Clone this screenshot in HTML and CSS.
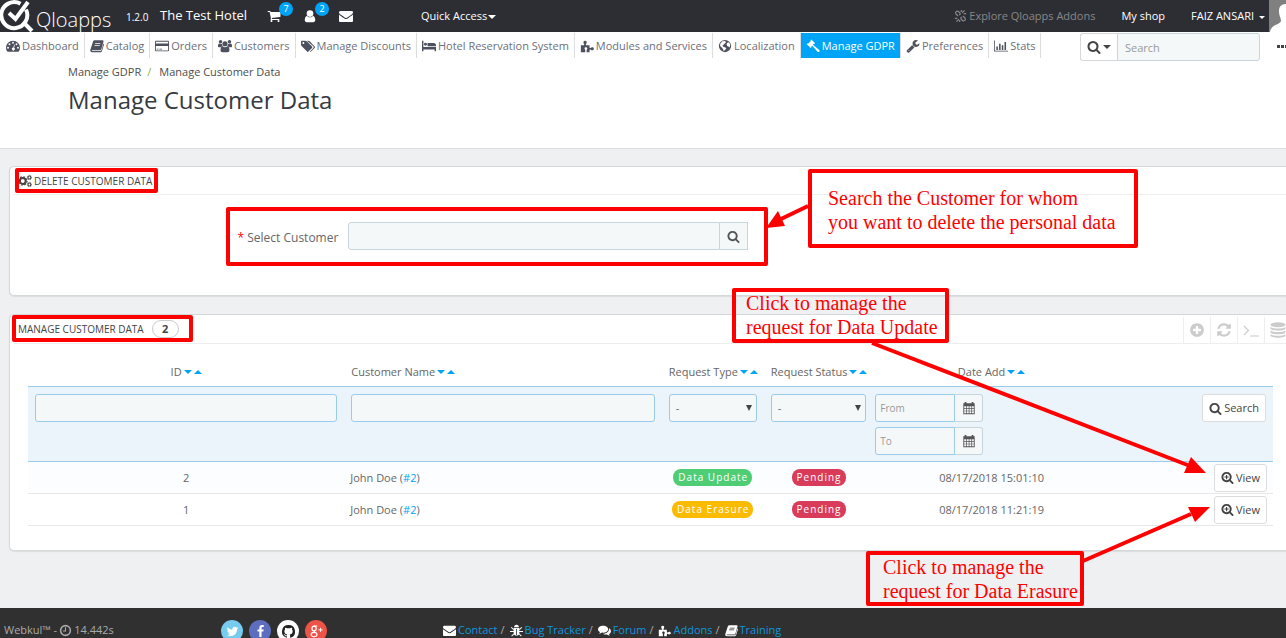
FILE: index.html
```html
<!DOCTYPE html>
<html lang="en">
<head>
<meta charset="utf-8">
<title>Manage Customer Data</title>
<link rel="stylesheet" href="styles.css">
</head>
<body>
<svg class="sprite" aria-hidden="true">
  <symbol id="search" viewBox="0 0 1792 1792"><path d="M1216 832q0-185-131.5-316.5t-316.5-131.5-316.5 131.5-131.5 316.5 131.5 316.5 316.5 131.5 316.5-131.5 131.5-316.5zm512 832q0 52-38 90t-90 38q-54 0-90-38l-343-342q-179 124-399 124-143 0-273.5-55.5t-225-150-150-225-55.5-273.5 55.5-273.5 150-225 225-150 273.5-55.5 273.5 55.5 225 150 150 225 55.5 273.5q0 220-124 399l343 343q37 37 37 90z"/></symbol>
  <symbol id="zoom" viewBox="0 0 1792 1792"><path d="M1216 832q0-185-131.5-316.5t-316.5-131.5-316.5 131.5-131.5 316.5 131.5 316.5 316.5 131.5 316.5-131.5 131.5-316.5zm512 832q0 52-38 90t-90 38q-54 0-90-38l-343-342q-179 124-399 124-143 0-273.5-55.5t-225-150-150-225-55.5-273.5 55.5-273.5 150-225 225-150 273.5-55.5 273.5 55.5 225 150 150 225 55.5 273.5q0 220-124 399l343 343q37 37 37 90z"/><path d="M690 540h156v214h214v156h-214v214h-156v-214h-214v-156h214z"/></symbol>
  <symbol id="plus" viewBox="0 0 1792 1792"><path d="M1344 960v-128q0-26-19-45t-45-19h-256v-256q0-26-19-45t-45-19h-128q-26 0-45 19t-19 45v256h-256q-26 0-45 19t-19 45v128q0 26 19 45t45 19h256v256q0 26 19 45t45 19h128q26 0 45-19t19-45v-256h256q26 0 45-19t19-45zm320-64q0 209-103 385.5t-279.5 279.5-385.5 103-385.5-103-279.5-279.5-103-385.5 103-385.5 279.5-279.5 385.5-103 385.5 103 279.5 279.5 103 385.5z"/></symbol>
  <symbol id="refresh" viewBox="0 0 1792 1792"><path d="M1639 1056q0 5-1 7-64 268-268 434.5t-478 166.5q-146 0-282.5-55t-243.5-157l-129 129q-19 19-45 19t-45-19-19-45v-448q0-26 19-45t45-19h448q26 0 45 19t19 45-19 45l-137 137q71 66 161 102t187 36q134 0 250-65t186-179q11-17 53-117 8-23 30-23h192q13 0 22.5 9.5t9.5 22.5zm25-800v448q0 26-19 45t-45 19h-448q-26 0-45-19t-19-45 19-45l138-138q-148-137-349-137-134 0-250 65t-186 179q-11 17-53 117-8 23-30 23h-199q-13 0-22.5-9.5t-9.5-22.5v-7q65-268 270-434.5t480-166.5q146 0 284 55.5t245 156.5l130-129q19-19 45-19t45 19 19 45z"/></symbol>
  <symbol id="mail" viewBox="0 0 1792 1792"><path d="M1792 710v794q0 66-47 113t-113 47h-1472q-66 0-113-47t-47-113v-794q44 49 101 87 362 246 497 345 57 42 92.5 65.5t94.5 48 110 24.5h2q51 0 110-24.5t94.5-48 92.5-65.5q170-123 498-345 57-39 100-87zm0-294q0 79-49 151t-122 123q-376 261-468 325-10 7-42.5 31t-54 38.5-52 32.5-57.5 27-50 9h-2q-23 0-50-9t-57.5-27-52-32.5-54-38.5-42.5-31q-91-64-262-182.5t-205-142.5q-62-42-117-115.5t-55-136.5q0-78 41.5-130t118.5-52h1472q65 0 112.5 47t47.5 113z"/></symbol>
  <symbol id="cart" viewBox="0 0 1792 1792"><path d="M704 1536q0 52-38 90t-90 38-90-38-38-90 38-90 90-38 90 38 38 90zm896 0q0 52-38 90t-90 38-90-38-38-90 38-90 90-38 90 38 38 90zm128-1088v512q0 24-16.5 42.5t-40.5 21.5l-1044 122q13 60 13 70 0 16-24 64h920q26 0 45 19t19 45-19 45-45 19h-1024q-26 0-45-19t-19-45q0-11 8-31.5t16-36 21.5-40 15.5-29.5l-177-823h-204q-26 0-45-19t-19-45 19-45 45-19h256q16 0 28.5 6.5t19.5 15.5 13 24.5 8 26 5.5 29.5 4.5 26h1201q26 0 45 19t19 45z"/></symbol>
  <symbol id="user" viewBox="0 0 16 16"><circle cx="8" cy="5.2" r="3.8"/><path d="M4.6 7.6C2.6 8.2 2 10.500 2 12.600 2 14.200 3 15 4.300 15h7.400c1.300 0 2.300-.8 2.300-2.400 0-2.100-.6-4.400-2.600-5C10.500 8.800 9.400 9.500 8 9.500S5.500 8.800 4.600 7.600z"/></symbol>
  <symbol id="wrench" viewBox="0 0 1792 1792"><path d="M448 1472q0-26-19-45t-45-19-45 19-19 45 19 45 45 19 45-19 19-45zm644-420l-682 682q-37 37-90 37-52 0-91-37l-106-108q-38-36-38-90 0-53 38-91l681-681q39 98 114.500 173.500t173.500 114.500zm634-435q0 39-23 106-47 134-164.500 217.500t-258.500 83.500q-185 0-316.500-131.500t-131.500-316.500 131.500-316.500 316.500-131.500q58 0 121.500 16.500t107.500 46.500q16 11 16 28t-16 28l-293 169v224l193 107q5-3 79-48.500t135.500-81 70.500-35.500q15 0 23.500 10t8.500 25z"/></symbol>
  <symbol id="dash" viewBox="0 0 16 16"><path fill-rule="evenodd" d="M8 2a8 8 0 0 0-8 8c0 1.500.4 2.900 1.200 4.100.2.300.4.400.7.400h12.200c.3 0 .5-.1.700-.4A7.800 7.800 0 0 0 16 10a8 8 0 0 0-8-8zM2.300 8.900a1.100 1.100 0 1 1 0 2.200 1.100 1.100 0 0 1 0-2.200zm1.700-4a1.100 1.100 0 1 1 0 2.200 1.100 1.100 0 0 1 0-2.200zm4-1.700a1.100 1.100 0 1 1 0 2.200 1.100 1.100 0 0 1 0-2.200zm4 1.700a1.100 1.100 0 1 1 0 2.200 1.100 1.100 0 0 1 0-2.200zm1.700 4a1.100 1.100 0 1 1 0 2.200 1.100 1.100 0 0 1 0-2.200zM9.300 6.400l.8.200-.8 3.300a1.700 1.700 0 1 1-.9-.2z"/></symbol>
  <symbol id="book" viewBox="0 0 16 16"><path fill-rule="evenodd" d="M5.400 1.500h8.800c1 0 1.500.8 1.200 1.700l-2.500 8.500c-.2.700-.8 1.100-1.500 1.100H2.600c-.7 0-.8.700-.2.900h9.700c.5 0 .9-.3 1-.8l2.300-7.700c.6.400.7 1 .5 1.700l-2.300 7c-.3.700-1 1.200-1.700 1.200H2.300C.8 15.100-.1 13.500.4 12.200L3.500 2.800c.3-.8 1-1.300 1.900-1.300zM6 4.500l-.3 1h6l.3-1zm-.7 2.300-.3 1h6l.3-1z"/></symbol>
  <symbol id="card" viewBox="0 0 16 16"><path fill-rule="evenodd" d="M1.200 2h13.600c.7 0 1.200.5 1.200 1.200v9.600c0 .7-.5 1.200-1.200 1.200H1.200C.5 14 0 13.500 0 12.800V3.200C0 2.500.5 2 1.200 2zM1 3v2h14V3zm0 5v5h14V8zm1 3h2v1H2zm3 0h3v1H5z"/></symbol>
  <symbol id="users" viewBox="0 0 16 16"><circle cx="8" cy="5.500" r="2.900"/><circle cx="2.900" cy="3.100" r="2"/><circle cx="13.100" cy="3.100" r="2"/><path d="M0 8.200c0-1.800.4-3 1.500-3 .9.700 2.200.7 3 .2 0 1.200.4 2 1 2.800-1 0-1.800.5-2.300 1.200H1.300C.6 9.400 0 9 0 8.200zM16 8.200c0-1.800-.4-3-1.500-3-.9.700-2.200.7-3 .2 0 1.200-.4 2-1 2.800 1 0 1.800.5 2.300 1.200h1.900c.7 0 1.300-.4 1.300-1.200zM5.200 8.200C3.500 8.300 2.900 10.500 2.900 12.800c0 1.300.8 2.200 2.200 2.200h5.800c1.400 0 2.200-.9 2.200-2.200 0-2.300-.6-4.500-2.300-4.600-.8.700-1.700 1.100-2.800 1.100S6 8.900 5.200 8.200z"/></symbol>
  <symbol id="tags" viewBox="0 0 16 16"><path fill-rule="evenodd" d="M0 3c0-.6.500-1.100 1.100-1.100h3.600c.6 0 1.400.3 1.900.8l6 6c.5.500.5 1.100 0 1.600l-4.100 4.100c-.5.500-1.100.5-1.600 0l-6-6C.4 7.900 0 7.200 0 6.600zm2.700.3a1.100 1.100 0 1 0 0 2.300 1.100 1.100 0 0 0 0-2.300z"/><path d="M6.700 1.900h1.400c.6 0 1.400.3 1.900.8l5.600 6c.5.500.5 1.100 0 1.600l-4.100 4.100c-.4.400-1 .5-1.400.2l4-4.200c.6-.6.500-1.400 0-2z"/></symbol>
  <symbol id="bed" viewBox="0 0 16 14"><path d="M0 1h1.600v7H16v5h-1.600v-2H1.600v2H0z"/><circle cx="4" cy="5" r="1.700"/><path d="M6.300 3.500h7C15 3.500 16 4.600 16 6v1.300H6.300z"/></symbol>
  <symbol id="puzzle" viewBox="0 0 16 16"><path d="M1 7h3.300c.8 0 .7-.7.300-1.300C3.600 4.400 3.600 2 5.800 2S8 4.400 7 5.700c-.4.600-.5 1.300.3 1.300h3.600v2.600c0 .9.700 1 1.400.5 1-1 3.500-.9 3.500 1.100s-2.500 2.100-3.500 1.100c-.7-.5-1.400-.3-1.400.5V15H7.600v-2.300c0-.8.900-1.200.7-2.200-.2-1.500-2.900-1.600-3.100 0-.2 1 .8 1.400.8 2.200V15H1z"/></symbol>
  <symbol id="globe" viewBox="0 0 16 16"><path fill-rule="evenodd" d="M8 1a7 7 0 1 0 0 14A7 7 0 0 0 8 1zM5 2.700 8 2.300 9.200 3.600 7.800 5.100 6.600 6.200 5 7.800 6.500 9 8.300 9.300 9.500 11 7.900 12.700 6.500 14 5.800 11.600 4.300 9.800 2.400 8 2.600 5.500zM10.200 4.600 12.600 3.800 14 6.700 13.300 9.800 11.900 8.500 10.400 7.900 9.900 6.200z"/></symbol>
  <symbol id="gavel" viewBox="0 0 16 16"><path d="M6.200.6 10.400 4.800 9.400 5.800 8.900 5.500 7.900 6.600 15.200 12.500C16.400 13.700 14.500 15.700 13.200 14.600L7.100 7.600 6 8.600 6.400 9.200 5.400 10.200 1 5.900 2 4.900 2.600 5.200 5.500 2.300 5.100 1.700z"/></symbol>
  <symbol id="chart" viewBox="0 0 18 16"><path d="M0 1h1v13h17v1H0zM3 8.500h2V13H3zM6.500 5h2v8h-2zM10 7h2v6h-2zM13.500 3h2v10h-2z"/></symbol>
  <symbol id="cogs" viewBox="0 0 16 16"><g fill="none" stroke="currentColor"><circle cx="5.500" cy="8" r="3.300" stroke-width="2.300"/><circle cx="5.500" cy="8" r="4.800" stroke-width="1.400" stroke-dasharray="1.900 1.870"/><circle cx="13" cy="4" r="1.700" stroke-width="1.300"/><circle cx="13" cy="12" r="1.700" stroke-width="1.300"/><circle cx="13" cy="4" r="2.600" stroke-width=".8" stroke-dasharray="1 1.040"/><circle cx="13" cy="12" r="2.600" stroke-width=".8" stroke-dasharray="1 1.040"/></g></symbol>
  <symbol id="calendar" viewBox="0 0 16 16"><path fill-rule="evenodd" d="M3 1h2v1.500h6V1h2v1.500h1.500V15h-13V2.500H3zM2.500 6v2h2.200V6zm3 0v2h2.200V6zm3 0v2h2.200V6zm3 0v2h2V6zm-9 2.800v2.200h2.200V8.800zm3 0v2.200h2.200V8.800zm3 0v2.200h2.200V8.800zm3 0v2.200h2V8.800zm-9 3v2.200h2.200v-2.200zm3 0v2.200h2.200v-2.200zm3 0v2.200h2.200v-2.200zm3 0v2.200h2v-2.200z"/></symbol>
  <symbol id="terminal" viewBox="0 0 16 16"><path d="m1 4 4.500 4.500L1 13M7 14h9" fill="none" stroke="currentColor" stroke-width="1.200"/></symbol>
  <symbol id="database" viewBox="0 0 16 16"><ellipse cx="8" cy="2.800" rx="7.500" ry="2.500"/><path d="M.5 5c3 2 12 2 15 0v1.600c0 2.700-15 2.700-15 0zM.5 8.600c3 2 12 2 15 0v1.600c0 2.700-15 2.700-15 0zM.5 12.200c3 2 12 2 15 0v1.300c0 2.900-15 2.900-15 0z"/></symbol>
  <symbol id="clock" viewBox="0 0 16 16"><path d="M8 4v4.500H5" fill="none" stroke="currentColor" stroke-width="1.300"/><circle cx="8" cy="8" r="6" fill="none" stroke="currentColor" stroke-width="1.900"/></symbol>
  <symbol id="broken" viewBox="0 0 16 16"><path d="M8 5 5.500 2.500C3.500 1 .8 3.500 2.500 5.500L5 8M8 11l2.500 2.500c2 1.500 4.700-1 3-3L11 8M10 4l3-3M12 5h3M9 3V.5M6 12l-3 3M4 11H1M7 13v2.500M8 5l-1.500 2M8 11l1.500-2" fill="none" stroke="currentColor" stroke-width="1.500"/></symbol>
  <symbol id="bug" viewBox="0 0 16 16"><path d="M5 4c0-1.700 1.300-3 3-3s3 1.300 3 3zM4.500 5h7v6.500c0 4-7 4-7 0z"/><path d="M1.500 4 4.500 7M14.500 4l-3 3M0 9.200h16M2 15l3-3M14 15l-3-3" fill="none" stroke="currentColor" stroke-width="1.300"/><path d="M8 6v8" stroke="#303030"/></symbol>
  <symbol id="chat" viewBox="0 0 16 16"><path d="M6.300 2C2.800 2 0 4 0 6.500c0 1.500 1 2.800 2.500 3.600-.3.800-.8 1.400-1.300 1.900 1.600-.1 2.900-.7 3.800-1.400 4 .6 7.600-1.400 7.600-4.100C12.600 4 9.800 2 6.300 2z"/><path d="M13.500 5.200c3.200 1.700 3.300 5.500 0 7.300.3.800.8 1.300 1.300 1.800-1.600-.1-2.900-.7-3.800-1.400-1.800.3-3.600 0-5-1 4.300.2 7.500-2.500 7.500-5.500z"/></symbol>
  <symbol id="twitter" viewBox="0 0 1792 1792"><path d="M1684 408q-67 98-162 167 1 14 1 42 0 130-38 259.500t-115.500 248.500-184.500 210.500-258 146-323 54.500q-271 0-496-145 35 4 78 4 225 0 401-138-105-2-188-64.500t-114-159.500q33 5 61 5 43 0 85-11-112-23-185.500-111.500t-73.500-205.500v-4q68 38 146 41-66-44-105-115t-39-154q0-88 44-163 121 149 294.500 238.500t371.500 99.500q-8-38-8-74 0-134 94.500-228.500t228.500-94.500q140 0 236 102 109-21 205-78-37 115-142 178 93-10 186-50z"/></symbol>
  <symbol id="facebook" viewBox="0 0 1792 1792"><path d="M1343 12v264h-157q-86 0-116 36t-30 108v189h293l-39 296h-254v759h-306v-759h-255v-296h255v-218q0-186 104-288.500t277-102.500q147 0 228 12z"/></symbol>
  <symbol id="github" viewBox="0 0 16 16"><path d="M5.470 15.590c.4.070.55-.17.55-.38 0-.19-.01-.82-.01-1.490-2.010.37-2.530-.49-2.690-.94-.09-.23-.48-.94-.82-1.130-.28-.15-.68-.52-.01-.53.63-.01 1.080.58 1.230.82.72 1.210 1.870.87 2.330.66.070-.52.28-.87.51-1.070-1.780-.2-3.640-.89-3.640-3.950 0-.87.31-1.590.82-2.150-.08-.2-.36-1.020.08-2.120 0 0 .67-.21 2.200.82.64-.18 1.320-.27 2-.27s1.360.09 2 .27c1.530-1.040 2.200-.82 2.200-.82.44 1.100.16 1.920.08 2.120.51.56.82 1.270.82 2.150 0 3.070-1.870 3.750-3.650 3.950.29.25.54.73.54 1.480 0 1.070-.01 1.930-.01 2.200 0 .21.15.46.55.38A8 8 0 0 0 8 0a8 8 0 0 0-2.530 15.590z"/></symbol>
  <symbol id="gplus" viewBox="0 0 16 16"><g fill="none" stroke="currentColor"><ellipse cx="5" cy="4.300" rx="2.600" ry="3" stroke-width="1.500"/><path d="M5 1.200h4M6.500 6.800c-2 1-2 1.500-.3 2.300" stroke-width="1.300"/><ellipse cx="5" cy="11.800" rx="3.600" ry="2.700" stroke-width="1.400"/><path d="M13 3.500v5M10.500 6h5" stroke-width="1.200"/></g></symbol>
</svg>

<header class="topbar">
  <a class="logo" href="#" aria-label="Qloapps">
    <svg class="logo-mark" viewBox="0 0 34 32" fill="none" stroke="#fff"><path d="M20.500 3.700A13 13 0 1 0 26 9.500" stroke-width="4"/><path d="m9 13 6.500 6L28 2" stroke-width="4"/><path d="m23 22 9 9" stroke-width="4"/></svg>
    <span class="logo-name">Qloapps</span>
  </a>
  <span class="version">1.2.0</span>
  <a class="hotel" href="#">The Test Hotel</a>
  <a class="notif" href="#" aria-label="Orders"><svg class="ic"><use href="#cart"/></svg><span class="count">7</span></a>
  <a class="notif" href="#" aria-label="Customers"><svg class="ic"><use href="#user"/></svg><span class="count">2</span></a>
  <a class="notif" href="#" aria-label="Messages"><svg class="ic"><use href="#mail"/></svg></a>
  <button class="quick" type="button">Quick Access<i class="caret"></i></button>
  <a class="explore" href="#"><svg class="ic"><use href="#broken"/></svg>Explore Qloapps Addons</a>
  <a class="shop" href="#">My shop</a>
  <button class="account" type="button">FAIZ ANSARI<i class="caret small"></i></button>
  <svg class="avatar" viewBox="0 0 17 32"><path fill="#808080" d="M0 0h17v32H0z"/><path fill="#fff" d="M17 4c-5 0-7 3-7 7 0 5 2 7 2 10-1 4-10 3-11 11h16z"/></svg>
</header>

<div class="menubar">
  <nav class="menu">
    <a href="#"><svg class="ic"><use href="#dash"/></svg>Dashboard</a>
    <a href="#"><svg class="ic"><use href="#book"/></svg>Catalog</a>
    <a href="#"><svg class="ic"><use href="#card"/></svg>Orders</a>
    <a href="#"><svg class="ic"><use href="#users"/></svg>Customers</a>
    <a href="#"><svg class="ic"><use href="#tags"/></svg>Manage Discounts</a>
    <a href="#"><svg class="ic"><use href="#bed"/></svg>Hotel Reservation System</a>
    <a href="#"><svg class="ic"><use href="#puzzle"/></svg>Modules and Services</a>
    <a href="#"><svg class="ic"><use href="#globe"/></svg>Localization</a>
    <a href="#" class="active"><svg class="ic"><use href="#gavel"/></svg>Manage GDPR</a>
    <a href="#"><svg class="ic"><use href="#wrench"/></svg>Preferences</a>
    <a href="#"><svg class="ic"><use href="#chart"/></svg>Stats</a>
  </nav>
  <form class="site-search">
    <button type="button" aria-label="Search scope"><svg class="ic"><use href="#search"/></svg><i class="caret"></i></button>
    <input type="text" placeholder="Search" aria-label="Search">
  </form>
  <span class="dots"><i></i><i></i><i></i></span>
</div>

<div class="page-head">
  <div class="crumbs"><a href="#">Manage GDPR</a><span class="slash">/</span><a href="#">Manage Customer Data</a></div>
  <h1>Manage Customer Data</h1>
</div>

<main>
  <section class="panel panel-delete">
    <h2><svg class="ic"><use href="#cogs"/></svg>DELETE CUSTOMER DATA</h2>
    <div class="form-row">
      <label for="customer"><b>*</b> Select Customer</label>
      <div class="group wide"><input id="customer" type="text"><button type="button" aria-label="Search customer"><svg class="ic"><use href="#search"/></svg></button></div>
    </div>
  </section>

  <section class="panel panel-list">
    <div class="panel-top">
      <h2>MANAGE CUSTOMER DATA<span class="total">2</span></h2>
      <div class="tools">
        <button type="button" aria-label="Add"><svg class="ic"><use href="#plus"/></svg></button>
        <button type="button" aria-label="Refresh"><svg class="ic"><use href="#refresh"/></svg></button>
        <button type="button" aria-label="Show SQL query"><svg class="ic"><use href="#terminal"/></svg></button>
        <button type="button" aria-label="Export to SQL manager"><svg class="ic"><use href="#database"/></svg></button>
      </div>
    </div>
    <table>
      <colgroup><col class="c-id"><col class="c-name"><col class="c-type"><col class="c-status"><col class="c-date"><col></colgroup>
      <thead>
        <tr class="titles">
          <th>ID<i class="caret"></i><i class="caret up"></i></th>
          <th class="left">Customer Name<i class="caret"></i><i class="caret up"></i></th>
          <th>Request Type<i class="caret"></i><i class="caret up"></i></th>
          <th>Request Status<i class="caret"></i><i class="caret up"></i></th>
          <th>Date Add<i class="caret"></i><i class="caret up"></i></th>
          <th></th>
        </tr>
        <tr class="filters">
          <td><input type="text" aria-label="ID"></td>
          <td><input type="text" aria-label="Customer name"></td>
          <td><div class="pick"><select aria-label="Request type"><option>-</option></select></div></td>
          <td><div class="pick"><select aria-label="Request status"><option>-</option></select></div></td>
          <td class="range">
            <div class="dates">
              <div class="group"><input type="text" placeholder="From" aria-label="From"><button type="button" aria-label="Pick start date"><svg class="ic"><use href="#calendar"/></svg></button></div>
              <div class="group"><input type="text" placeholder="To" aria-label="To"><button type="button" aria-label="Pick end date"><svg class="ic"><use href="#calendar"/></svg></button></div>
            </div>
          </td>
          <td class="right"><button class="btn" type="button"><svg class="ic"><use href="#search"/></svg>Search</button></td>
        </tr>
      </thead>
      <tbody>
        <tr><td>2</td><td class="left">John Doe (<a href="#">#2</a>)</td><td><span class="badge green">Data Update</span></td><td><span class="badge red">Pending</span></td><td>08/17/2018 15:01:10</td><td class="right"><button class="btn" type="button"><svg class="ic"><use href="#zoom"/></svg>View</button></td></tr>
        <tr><td>1</td><td class="left">John Doe (<a href="#">#2</a>)</td><td><span class="badge amber">Data Erasure</span></td><td><span class="badge red">Pending</span></td><td>08/17/2018 11:21:19</td><td class="right"><button class="btn" type="button"><svg class="ic"><use href="#zoom"/></svg>View</button></td></tr>
      </tbody>
    </table>
  </section>
</main>

<footer>
  <div class="credit"><span>Webkul™ -</span><svg class="ic"><use href="#clock"/></svg><span>14.442s</span></div>
  <div class="social">
    <a class="tw" href="#" aria-label="Twitter"><svg class="ic"><use href="#twitter"/></svg></a>
    <a class="fb" href="#" aria-label="Facebook"><svg class="ic"><use href="#facebook"/></svg></a>
    <a class="gh" href="#" aria-label="GitHub"><svg class="ic"><use href="#github"/></svg></a>
    <a class="gp" href="#" aria-label="Google Plus"><svg class="ic"><use href="#gplus"/></svg></a>
  </div>
  <div class="links">
    <a href="#"><svg class="ic"><use href="#mail"/></svg>Contact</a><span>/</span>
    <a href="#"><svg class="ic"><use href="#bug"/></svg>Bug Tracker</a><span>/</span>
    <a href="#"><svg class="ic"><use href="#chat"/></svg>Forum</a><span>/</span>
    <a href="#"><svg class="ic"><use href="#puzzle"/></svg>Addons</a><span>/</span>
    <a href="#"><svg class="ic"><use href="#book"/></svg>Training</a>
  </div>
</footer>

<div class="notes">
  <svg class="arrows" width="1286" height="638" fill="red" stroke="red">
    <path fill="none" stroke-width="4" d="M808 206 781 219M872 343l318 123M1083 561l108-47"/>
    <path stroke="none" d="m766 228 12-17 7 15zM1206 473l-15-16-7 16zM1210 507h-22l7 15z"/>
  </svg>
  <div class="note mark-delete"></div>
  <div class="note mark-select"></div>
  <div class="note mark-manage"></div>
  <p class="note say-search">Search the Customer for whom<br>you want to delete the personal data</p>
  <p class="note say-update"><span>Click to manage the<br>request for Data Update</span></p>
  <p class="note say-erase">Click to manage the<br>request for Data Erasure</p>
</div>
</body>
</html>
```
FILE: styles.css
```css
* { box-sizing: border-box; }
body {
  margin: 0;
  position: relative;
  min-height: 100vh;
  display: flex;
  flex-direction: column;
  overflow-x: hidden;
  background: #eff0f2;
  color: #666;
  font: 11px/16px "Open Sans", "Noto Sans", sans-serif;
}
a { color: inherit; text-decoration: none; }
button, input, select { font: inherit; color: inherit; margin: 0; }
button { background: none; border: 0; padding: 0; cursor: pointer; }
.sprite { position: absolute; width: 0; height: 0; }
.ic { width: 14px; height: 14px; fill: currentColor; flex: none; }
.caret {
  display: inline-block;
  border: 4px solid transparent;
  border-top-color: currentColor;
  border-bottom: 0;
  vertical-align: middle;
}
.caret.up { border-top: 0; border-bottom: 4px solid currentColor; }
.caret.small { border-width: 3px 3px 0; }

/* Top bar */
.topbar { display: flex; align-items: center; height: 32px; background: #2d2e34; color: #fff; }
.logo { display: flex; width: 126px; height: 32px; }
.logo-mark { width: 34px; height: 32px; }
.logo-name { margin-left: 2px; padding-top: 8px; font-size: 20px; line-height: 24px; font-weight: 300; }
.version { width: 34px; font-size: 10px; padding-top: 2px; }
.hotel { width: 107px; font-size: 13px; padding-bottom: 2px; }
.notif { position: relative; width: 36px; height: 18px; padding-top: 2px; }
.count {
  position: absolute; left: 12px; top: -5px;
  width: 14px; height: 14px; border-radius: 7px;
  background: #00a4f6; font-size: 9px; line-height: 14px; text-align: center;
}
.quick { margin-left: 46px; }
.quick .caret { margin-left: 1px; }
.explore { display: flex; align-items: center; gap: 2px; margin-left: auto; color: #888; }
.explore .ic { width: 13px; }
.shop { margin-left: 26px; }
.account { margin-left: 26px; }
.account .caret { margin: 0 4px 0 5px; }
.avatar { width: 17px; height: 32px; }

/* Main menu */
.menubar { display: flex; height: 30px; background: #fff; }
.menu { display: flex; height: 26px; padding-top: 1px; padding-left: 1px; color: #6c6f7a; }
.menu a { display: flex; align-items: center; gap: 2px; padding: 0 5px; border-right: 1px solid #ddd; white-space: nowrap; }
.menu .ic { color: #4d505d; }
.menu .active { background: #00a4f6; color: #fff; }
.menu .active .ic { color: #fff; }
.site-search { display: flex; height: 28px; margin: 1px 17px 0 auto; }
.site-search button { display: flex; align-items: center; gap: 2px; width: 37px; padding-left: 6px; border: 1px solid #d5d8da; border-right: 0; border-radius: 3px 0 0 3px; color: #444; }
.site-search input { width: 143px; }
.dots { display: flex; gap: 1px; width: 9px; padding-top: 13px; overflow: hidden; }
.dots i { flex: none; width: 3px; height: 3px; background: #444; }

input {
  height: 28px; padding: 0 7px; min-width: 0;
  background: #f5f8f9; border: 1px solid #c7d6db; border-radius: 3px;
}
input::placeholder { color: #999; opacity: 1; }
.site-search input { border-radius: 0 3px 3px 0; }

.page-head { height: 87px; padding: 2px 68px; background: #fff; border-bottom: 1px solid #ddd; color: #4d4d4d; }
.crumbs { display: flex; }
.slash { margin: 0 8px 0 6px; color: #7fb83d; }
h1 { margin: 4px 0 0; font-size: 24px; line-height: 32px; font-weight: 400; color: #363a41; }

/* Panels */
main { flex: 1; padding: 17px 0 57px 9px; }
.panel { background: #fff; border: 1px solid #d3d8db; border-right: 0; border-radius: 5px 0 0 5px; box-shadow: 0 1px 1px #ddd; }
.panel-delete { height: 130px; padding-left: 4px; margin-bottom: 18px; }
.panel-list { min-height: 237px; padding-left: 4px; }
h2 { display: flex; align-items: center; gap: 2px; margin: 0; height: 28px; padding-left: 4px; font: 400 10px/16px "Open Sans", "Noto Sans", sans-serif; color: #444; }
.panel-delete h2 { border-bottom: 1px solid #eee; }
.panel-top { display: flex; justify-content: space-between; height: 29px; border-bottom: 1px solid #eee; }
.total { margin-left: 6px; width: 27px; border: 1px solid #ccc; border-radius: 9px; text-align: center; font-size: 11px; font-weight: 700; }
.tools { display: flex; padding-top: 2px; }
.tools button { display: flex; align-items: center; justify-content: center; width: 27px; border-left: 1px solid #eee; color: #ccc; }
.tools button:last-child { width: 22px; justify-content: flex-end; }
.tools .ic { width: 16px; height: 16px; }

.form-row { display: flex; align-items: center; padding-top: 27px; }
.form-row label { width: 25.5%; padding-top: 3px; text-align: right; font-size: 12px; margin-right: 10px; }
.form-row b { color: #f00; font-weight: 400; }
.group { display: flex; height: 28px; }
.group input { flex: 1; border-radius: 3px 0 0 3px; }
.group button { display: flex; align-items: center; justify-content: center; width: 28px; background: #f5f8f9; border: 1px solid #c7d6db; border-left: 0; color: #555; }
.group.wide { width: 400px; }
.group.wide .ic { width: 13px; height: 13px; }

/* Listing */
table { width: calc(100% - 27px); margin: 14px 13px 0 14px; table-layout: fixed; border-collapse: separate; border-spacing: 0; }
.c-id { width: 25.4%; }
.c-name { width: 25.5%; }
.c-type { width: 8.2%; }
.c-status { width: 8.8%; }
.c-date { width: 19%; }
th, td { padding: 0 7px; font-weight: 400; text-align: center; white-space: nowrap; }
.left { text-align: left; }
.right { text-align: right; }
.titles th { height: 28px; }
th .caret { margin: 0 0 2px 2px; color: #00a4f6; }
.filters td { height: 76px; padding-top: 7px; vertical-align: top; background: #ebf4fb; border: 1px solid #99cbea; border-width: 1px 0; }
.filters .range { padding-left: 2px; }
.filters input, .pick select { display: block; width: 100%; border-color: #99cbea; }
.pick { position: relative; }
.pick::after { content: ""; position: absolute; right: 5px; top: 11px; border: 3px solid transparent; border-top: 6px solid #444; border-bottom: 0; }
.pick select { height: 28px; padding: 0 6px; appearance: none; background: #f5f8f9; border: 1px solid #99cbea; border-radius: 3px; }
.dates { display: flex; flex-direction: column; gap: 5px; width: 108px; }
.dates input { width: 81px; padding: 0 4px; font-size: 10px; }
.dates button { border-radius: 0 3px 3px 0; }
tbody td { height: 32px; border-bottom: 1px solid #e8e8e8; }
tbody tr:first-child td { background: #fcfdfe; }
tbody td.left { padding-left: 6px; }
tbody a { color: #00a4f6; }
tbody .right { padding-right: 6px; }
.btn { display: inline-flex; align-items: center; gap: 2px; height: 28px; padding: 0 6px; background: #fff; border: 1px solid #ddd; border-radius: 3px; color: #444; vertical-align: middle; }
.btn .ic { width: 13px; height: 13px; }
.badge { display: inline-block; height: 17px; padding: 0 4px 0 5px; border-radius: 8px; color: #fff; font-size: 10px; line-height: 17px; letter-spacing: 1px; }
.green { background: #4fcd74; }
.amber { background: #fbbb00; }
.red { background: #d93c5a; }

/* Footer */
footer { display: flex; height: 30px; background: #303030; color: #aaa; overflow: hidden; }
.credit { display: flex; align-items: center; gap: 2px; width: 221px; height: 30px; padding: 14px 0 0 4px; }
.credit .ic { width: 13px; height: 13px; }
.social { display: flex; gap: 6px; width: 222px; padding-top: 12px; }
.social a { display: flex; align-items: center; justify-content: center; width: 22px; height: 22px; border-radius: 11px; color: #fff; }
.social .ic { width: 13px; height: 13px; }
.tw { background: #76cbef; }
.fb { background: #5d6ebf; }
.social .gh { background: #fff; color: #222; }
.gp { background: #ee5347; }
.links { display: flex; align-items: center; height: 30px; padding-top: 14px; }
.links a { display: flex; align-items: center; gap: 2px; color: #0f95dc; }
.links .ic { width: 13px; height: 13px; color: #fff; }
.links span { margin: 0 5px 0 3px; }

/* Tutorial callouts laid over the page */
.notes { position: absolute; left: 0; top: 0; pointer-events: none; }
.arrows { display: block; }
.note { position: absolute; margin: 0; border: 4px solid #f00; border-radius: 2px; color: #f00; font: 20px/24px "Liberation Serif", serif; white-space: nowrap; }
.mark-delete { left: 15px; top: 168px; width: 143px; height: 25px; }
.mark-select { left: 226px; top: 207px; width: 542px; height: 59px; }
.mark-manage { left: 12px; top: 315px; width: 181px; height: 27px; }
.say-search { left: 808px; top: 169px; width: 330px; height: 79px; padding: 13px 16px; }
.say-update { display: flex; align-items: flex-end; left: 732px; top: 288px; width: 217px; height: 55px; padding-left: 10px; }
.say-erase { left: 866px; top: 551px; width: 218px; height: 55px; padding-left: 13px; }
```
